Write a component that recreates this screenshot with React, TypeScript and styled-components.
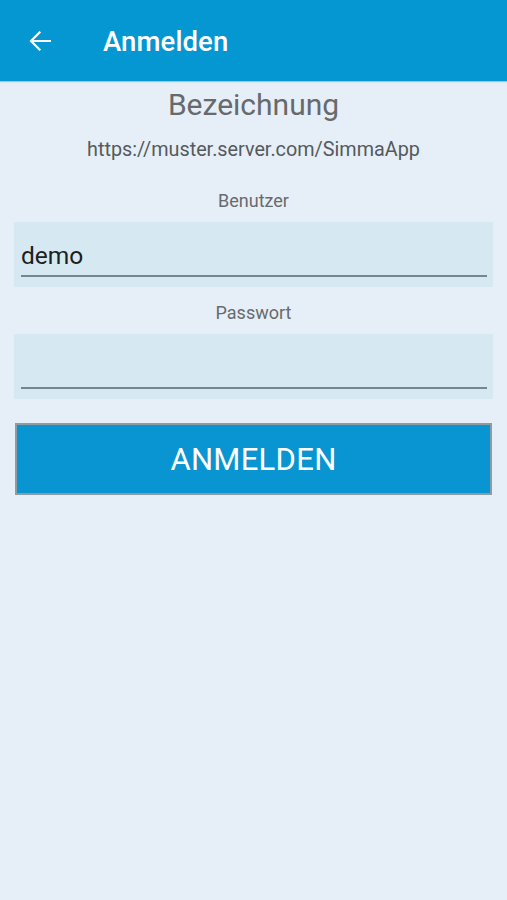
import React from "react";
import styled, { createGlobalStyle } from "styled-components";

const Global = createGlobalStyle`
  html, body { margin: 0; padding: 0; background: #e6eff7; }
  body { font-family: Roboto, "Noto Sans", Arial, sans-serif; }
  * { box-sizing: border-box; }
`;

const Screen = styled.div`
  width: 507px;
  min-height: 900px;
  background: #e6eff7;
  display: flex;
  flex-direction: column;
`;

const AppBar = styled.header`
  height: 81px;
  background: #0497d2;
  display: flex;
  align-items: center;
  padding-left: 28px;
  padding-top: 1px;
  box-shadow: 0 1px 1px rgba(0, 60, 100, 0.25);
`;

const BackButton = styled.button`
  width: 24px;
  height: 22px;
  border: none;
  padding: 0;
  background: transparent;
  display: flex;
  align-items: center;
  justify-content: center;
  margin-right: 51px;
  cursor: pointer;
`;

const Title = styled.h1`
  margin: 0;
  color: #ffffff;
  font-family: Roboto, sans-serif;
  font-weight: 500;
  font-size: 27.5px;
  letter-spacing: 0.1px;
`;

const Content = styled.main`
  display: flex;
  flex-direction: column;
  padding: 0 14px;
`;

const Heading = styled.div`
  margin-top: 6px;
  text-align: center;
  color: #666a6c;
  font-size: 30px;
  line-height: 36px;
`;

const Url = styled.div`
  margin-top: 15px;
  text-align: center;
  color: #555a5c;
  font-size: 19.8px;
  line-height: 24px;
`;

const Label = styled.label<{ $top: number }>`
  margin-top: ${(p) => p.$top}px;
  text-align: center;
  color: #676b6d;
  font-size: 18px;
  line-height: 22px;
  display: block;
`;

const Field = styled.div`
  margin-top: 10px;
  height: 65px;
  background: #d6e8f2;
  padding: 0 6px 10px 7px;
  display: flex;
  align-items: flex-end;
`;

const Input = styled.input`
  width: 100%;
  border: none;
  border-bottom: 2px solid #74868f;
  background: transparent;
  outline: none;
  font-family: Roboto, sans-serif;
  font-size: 24.5px;
  color: #1c1f21;
  padding: 0 0 3px 0;
  height: 38px;
`;

const SubmitButton = styled.button`
  margin: 24px 1px 0;
  height: 72px;
  background: #0995d1;
  border: 2px solid #8d9ba3;
  color: #ffffff;
  font-family: Roboto, sans-serif;
  font-size: 31px;
  letter-spacing: 0.3px;
  cursor: pointer;
`;

export default function App() {
  return (
    <>
      <Global />
      <Screen>
        <AppBar>
          <BackButton aria-label="Zurück">
            <svg width="22" height="20" viewBox="0 0 22 20" fill="none">
              <path
                d="M21 10H2.5M10.5 1.5L2 10l8.5 8.5"
                stroke="#ffffff"
                strokeWidth="2.2"
                strokeLinecap="square"
              />
            </svg>
          </BackButton>
          <Title>Anmelden</Title>
        </AppBar>
        <Content>
          <Heading>Bezeichnung</Heading>
          <Url>https://muster.server.com/SimmaApp</Url>
          <Label $top={28}>Benutzer</Label>
          <Field>
            <Input defaultValue="demo" />
          </Field>
          <Label $top={15}>Passwort</Label>
          <Field>
            <Input type="password" defaultValue="" />
          </Field>
          <SubmitButton>ANMELDEN</SubmitButton>
        </Content>
      </Screen>
    </>
  );
}
